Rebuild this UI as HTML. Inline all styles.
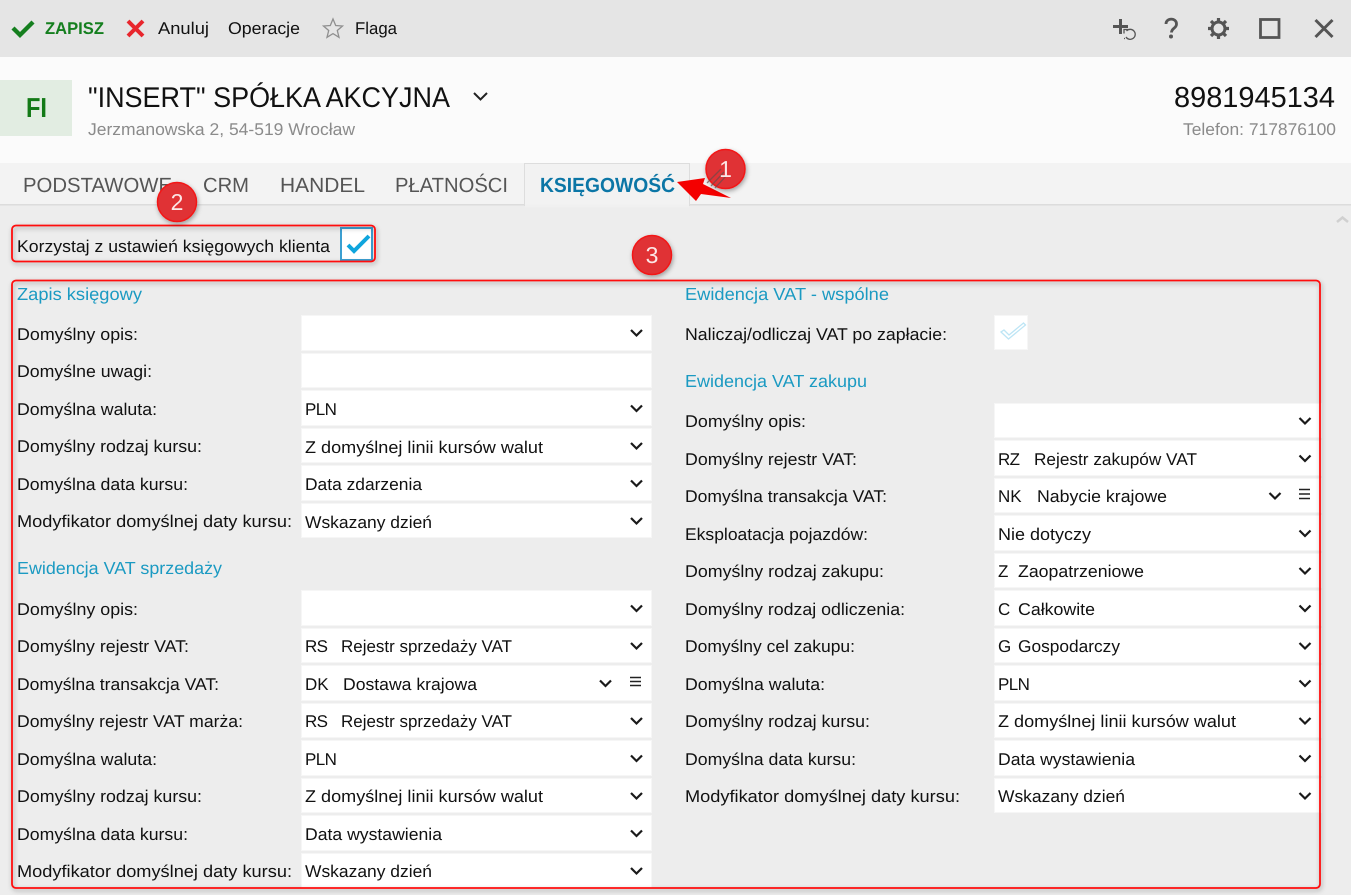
<!DOCTYPE html>
<html lang="pl"><head><meta charset="utf-8"><title>Księgowość</title>
<style>
html,body{margin:0;padding:0;background:#ededed;width:1351px;height:895px;overflow:hidden}
svg{display:block}
text{font-family:"Liberation Sans",sans-serif;font-size:17px;fill:#111;text-rendering:geometricPrecision}
.t{fill:#1b9ac2;font-size:17.5px}
.g{fill:#8b8b8b;font-size:17px}
.tab{fill:#555;font-size:20.5px}
.c{fill:#fff;fill-opacity:.88;font-size:23px;text-anchor:middle}
.b{fill:#fff;stroke:#f6f6f6;stroke-width:1}
.s{letter-spacing:-.6px}
</style></head><body>
<svg width="1351" height="895" viewBox="0 0 1351 895" xmlns="http://www.w3.org/2000/svg">
<defs><filter id="s" x="-10%" y="-10%" width="120%" height="120%"><feDropShadow dx="1" dy="2" stdDeviation="2.5" flood-color="#000" flood-opacity=".35"/></filter></defs>
<rect width="1351" height="895" fill="#ededed"/>
<rect width="1351" height="57" fill="#e5e5e5"/>
<rect y="57" width="1351" height="106" fill="#fbfbfb"/>
<rect y="163" width="1351" height="41" fill="#f3f3f3"/>
<rect y="204" width="1351" height="1.500" fill="#dcdcdc"/>
<rect x="524.500" y="163.500" width="165" height="42" fill="#f2f2f2" stroke="#dddddd"/>
<rect y="204.500" x="525" width="164" height="3" fill="#f0f0f0"/>

<!-- toolbar -->
<path d="M13 28l7 7 13-13" fill="none" stroke="#157f1f" stroke-width="4.300"/>
<text x="45" y="34" textLength="59" lengthAdjust="spacingAndGlyphs" style="fill:#157f1f;font-weight:bold">ZAPISZ</text>
<path d="M128 21l15 15M143 21l-15 15" fill="none" stroke="#e8262d" stroke-width="4"/>
<text x="158" y="34" textLength="51" lengthAdjust="spacingAndGlyphs">Anuluj</text>
<text x="228" y="34" textLength="72" lengthAdjust="spacingAndGlyphs">Operacje</text>
<path d="M333 19l2.700 6.500 6.800.5-5.200 4.500 1.700 6.800-6-3.700-6 3.700 1.700-6.800-5.200-4.500 6.800-.5z" fill="none" stroke="#8f8f8f" stroke-width="1.300"/>
<text x="355" y="34" textLength="42" lengthAdjust="spacingAndGlyphs">Flaga</text>

<path d="M1113 26.500h15M1120.500 19v15" stroke="#555" stroke-width="3" fill="none"/>
<path d="M1126.500 31a5 5 0 1 1 -.5 6M1128.500 29.500h-4.500v4M1124 38.500h1" stroke="#555" stroke-width="1.300" fill="none"/>
<path d="M1166 24c0-6.500 10.500-6.500 10.500 0 0 4.500-5 4-5 8.500" stroke="#555" stroke-width="2.800" fill="none"/>
<circle cx="1171" cy="36.500" r="2" fill="#555"/>
<circle cx="1218.500" cy="28.500" r="6.500" fill="none" stroke="#555" stroke-width="3"/>
<path d="M1218.500 18v4M1218.500 35v4M1208 28.500h4M1225 28.500h4M1211 21l3 3M1223 33l3 3M1226 21l-3 3M1214 33l-3 3" stroke="#555" stroke-width="3.200"/>
<rect x="1260.500" y="19.500" width="18.500" height="18" fill="none" stroke="#555" stroke-width="2.800"/>
<path d="M1315.500 20l17 17M1332.500 20l-17 17" stroke="#555" stroke-width="3" fill="none"/>

<!-- header -->
<rect y="80" width="72" height="56" fill="#e2ede2"/>
<text x="26" y="117" textLength="21" lengthAdjust="spacingAndGlyphs" style="font-size:27.500px;font-weight:bold;fill:#137a17">FI</text>
<text x="88" y="107" textLength="362" lengthAdjust="spacingAndGlyphs" style="font-size:28.500px">"INSERT" SPÓŁKA AKCYJNA</text>
<path d="M474 93l6.500 6.500 6.500-6.500" fill="none" stroke="#222" stroke-width="2"/>
<text x="88" y="135" textLength="267" lengthAdjust="spacingAndGlyphs" class="g">Jerzmanowska 2, 54-519 Wrocław</text>
<text x="1174" y="107" textLength="161" lengthAdjust="spacingAndGlyphs" style="font-size:29px">8981945134</text>
<text x="1183" y="135" textLength="153" lengthAdjust="spacingAndGlyphs" class="g">Telefon: 717876100</text>

<!-- tabs -->
<text x="23" y="192" textLength="149" lengthAdjust="spacingAndGlyphs" class="tab">PODSTAWOWE</text>
<text x="203" y="192" textLength="46" lengthAdjust="spacingAndGlyphs" class="tab">CRM</text>
<text x="280" y="192" textLength="85" lengthAdjust="spacingAndGlyphs" class="tab">HANDEL</text>
<text x="395" y="192" textLength="113" lengthAdjust="spacingAndGlyphs" class="tab">PŁATNOŚCI</text>
<text x="540" y="192" textLength="135" lengthAdjust="spacingAndGlyphs" style="font-size:20.500px;font-weight:bold;fill:#0b76a6">KSIĘGOWOŚĆ</text>
<path d="M1337 222l5.500-4.500 5.500 4.500" fill="none" stroke="#d0d0d0" stroke-width="2.500"/>

<!-- client checkbox -->
<text x="17" y="252" textLength="313" lengthAdjust="spacingAndGlyphs">Korzystaj z ustawień księgowych klienta</text>
<rect x="341" y="228" width="31" height="32" fill="#fff" stroke="#3b9fd1" stroke-width="2"/>
<path d="M348 245l6 6 15-15" fill="none" stroke="#0fa5dd" stroke-width="4"/>

<!-- white boxes -->
<g>
<rect class="b" x="301.500" y="315.500" width="350" height="35"/>
<rect class="b" x="301.500" y="353.500" width="350" height="34"/>
<rect class="b" x="301.500" y="390.500" width="350" height="35"/>
<rect class="b" x="301.500" y="428.500" width="350" height="34"/>
<rect class="b" x="301.500" y="465.500" width="350" height="35"/>
<rect class="b" x="301.500" y="503.500" width="350" height="34"/>
<rect class="b" x="301.500" y="590.500" width="350" height="35"/>
<rect class="b" x="301.500" y="628.500" width="350" height="34"/>
<rect class="b" x="301.500" y="665.500" width="350" height="35"/>
<rect class="b" x="301.500" y="703.500" width="350" height="34"/>
<rect class="b" x="301.500" y="740.500" width="350" height="35"/>
<rect class="b" x="301.500" y="778.500" width="350" height="34"/>
<rect class="b" x="301.500" y="815.500" width="350" height="35"/>
<rect class="b" x="301.500" y="853.500" width="350" height="34"/>
<rect class="b" x="994.500" y="403.500" width="327" height="34"/>
<rect class="b" x="994.500" y="440.500" width="327" height="35"/>
<rect class="b" x="994.500" y="478.500" width="327" height="34"/>
<rect class="b" x="994.500" y="515.500" width="327" height="35"/>
<rect class="b" x="994.500" y="553.500" width="327" height="34"/>
<rect class="b" x="994.500" y="590.500" width="327" height="35"/>
<rect class="b" x="994.500" y="628.500" width="327" height="34"/>
<rect class="b" x="994.500" y="665.500" width="327" height="35"/>
<rect class="b" x="994.500" y="703.500" width="327" height="34"/>
<rect class="b" x="994.500" y="740.500" width="327" height="35"/>
<rect class="b" x="994.500" y="778.500" width="327" height="34"/>
<rect class="b" x="994.500" y="315.500" width="33" height="34"/>
</g>
<path d="M1001 332l7.500 7 17-14-2-2-14.500 12-5-5z" fill="none" stroke="#bde5f5" stroke-width="1.300"/>

<!-- chevrons -->
<path fill="none" stroke="#1a1a1a" stroke-width="2.200" d="M631 330l5.500 5.500 5.500-5.500M631 405.500l5.500 5.500 5.500-5.500M631 443l5.500 5.500 5.500-5.500M631 480.500l5.500 5.500 5.500-5.500M631 518l5.500 5.500 5.500-5.500M631 605.500l5.500 5.500 5.500-5.500M631 643l5.500 5.500 5.500-5.500M600 680.500l5.500 5.500 5.500-5.500M631 718l5.500 5.500 5.500-5.500M631 755.500l5.500 5.500 5.500-5.500M631 793l5.500 5.500 5.500-5.500M631 830.500l5.500 5.500 5.500-5.500M631 868l5.500 5.500 5.500-5.500M1299.500 418l5.500 5.500 5.500-5.500M1299.500 455.500l5.500 5.500 5.500-5.500M1269.500 493l5.500 5.500 5.500-5.500M1299.500 530.500l5.500 5.500 5.500-5.500M1299.500 568l5.500 5.500 5.500-5.500M1299.500 605.500l5.500 5.500 5.500-5.500M1299.500 643l5.500 5.500 5.500-5.500M1299.500 680.500l5.500 5.500 5.500-5.500M1299.500 718l5.500 5.500 5.500-5.500M1299.500 755.500l5.500 5.500 5.500-5.500M1299.500 793l5.500 5.500 5.500-5.500"/>
<path fill="none" stroke="#222" stroke-width="1.400" d="M630 677.500h11M630 681.500h11M630 685.500h11M1299 489.500h11M1299 494h11M1299 498.500h11"/>

<!-- left column -->
<text class="t" x="17" y="300" textLength="125" lengthAdjust="spacingAndGlyphs">Zapis księgowy</text>
<text x="17" y="340" textLength="121" lengthAdjust="spacingAndGlyphs">Domyślny opis:</text>
<text x="17" y="377" textLength="135" lengthAdjust="spacingAndGlyphs">Domyślne uwagi:</text>
<text x="17" y="415" textLength="140" lengthAdjust="spacingAndGlyphs">Domyślna waluta:</text>
<text class="s" x="305" y="415">PLN</text>
<text x="17" y="452" textLength="185" lengthAdjust="spacingAndGlyphs">Domyślny rodzaj kursu:</text>
<text x="305" y="453" textLength="238" lengthAdjust="spacingAndGlyphs">Z domyślnej linii kursów walut</text>
<text x="17" y="490" textLength="171" lengthAdjust="spacingAndGlyphs">Domyślna data kursu:</text>
<text x="305" y="490" textLength="117" lengthAdjust="spacingAndGlyphs">Data zdarzenia</text>
<text x="17" y="527" textLength="275" lengthAdjust="spacingAndGlyphs">Modyfikator domyślnej daty kursu:</text>
<text x="305" y="528" textLength="127" lengthAdjust="spacingAndGlyphs">Wskazany dzień</text>

<text class="t" x="17" y="574" textLength="205" lengthAdjust="spacingAndGlyphs">Ewidencja VAT sprzedaży</text>
<text x="17" y="615" textLength="121" lengthAdjust="spacingAndGlyphs">Domyślny opis:</text>
<text x="17" y="652" textLength="172" lengthAdjust="spacingAndGlyphs">Domyślny rejestr VAT:</text>
<text class="s" x="305" y="652">RS</text>
<text x="341" y="652" textLength="171" lengthAdjust="spacingAndGlyphs">Rejestr sprzedaży VAT</text>
<text x="17" y="690" textLength="202" lengthAdjust="spacingAndGlyphs">Domyślna transakcja VAT:</text>
<text x="305" y="690">DK</text>
<text x="343" y="690" textLength="134" lengthAdjust="spacingAndGlyphs">Dostawa krajowa</text>
<text x="17" y="727" textLength="226" lengthAdjust="spacingAndGlyphs">Domyślny rejestr VAT marża:</text>
<text class="s" x="305" y="727">RS</text>
<text x="341" y="727" textLength="171" lengthAdjust="spacingAndGlyphs">Rejestr sprzedaży VAT</text>
<text x="17" y="765" textLength="140" lengthAdjust="spacingAndGlyphs">Domyślna waluta:</text>
<text class="s" x="305" y="765">PLN</text>
<text x="17" y="802" textLength="185" lengthAdjust="spacingAndGlyphs">Domyślny rodzaj kursu:</text>
<text x="305" y="802" textLength="238" lengthAdjust="spacingAndGlyphs">Z domyślnej linii kursów walut</text>
<text x="17" y="840" textLength="171" lengthAdjust="spacingAndGlyphs">Domyślna data kursu:</text>
<text x="305" y="840" textLength="137" lengthAdjust="spacingAndGlyphs">Data wystawienia</text>
<text x="17" y="877" textLength="275" lengthAdjust="spacingAndGlyphs">Modyfikator domyślnej daty kursu:</text>
<text x="305" y="877" textLength="127" lengthAdjust="spacingAndGlyphs">Wskazany dzień</text>

<!-- right column -->
<text class="t" x="685" y="300" textLength="204" lengthAdjust="spacingAndGlyphs">Ewidencja VAT - wspólne</text>
<text x="685" y="340" textLength="262" lengthAdjust="spacingAndGlyphs">Naliczaj/odliczaj VAT po zapłacie:</text>
<text class="t" x="685" y="387" textLength="182" lengthAdjust="spacingAndGlyphs">Ewidencja VAT zakupu</text>
<text x="685" y="427" textLength="121" lengthAdjust="spacingAndGlyphs">Domyślny opis:</text>
<text x="685" y="465" textLength="172" lengthAdjust="spacingAndGlyphs">Domyślny rejestr VAT:</text>
<text class="s" x="998" y="465">RZ</text>
<text x="1034" y="465" textLength="163" lengthAdjust="spacingAndGlyphs">Rejestr zakupów VAT</text>
<text x="685" y="502" textLength="202" lengthAdjust="spacingAndGlyphs">Domyślna transakcja VAT:</text>
<text x="998" y="502">NK</text>
<text x="1037" y="502" textLength="130" lengthAdjust="spacingAndGlyphs">Nabycie krajowe</text>
<text x="685" y="540" textLength="183" lengthAdjust="spacingAndGlyphs">Eksploatacja pojazdów:</text>
<text x="998" y="540" textLength="93" lengthAdjust="spacingAndGlyphs">Nie dotyczy</text>
<text x="685" y="577" textLength="199" lengthAdjust="spacingAndGlyphs">Domyślny rodzaj zakupu:</text>
<text x="998" y="577">Z</text>
<text x="1018" y="577" textLength="126" lengthAdjust="spacingAndGlyphs">Zaopatrzeniowe</text>
<text x="685" y="615" textLength="220" lengthAdjust="spacingAndGlyphs">Domyślny rodzaj odliczenia:</text>
<text x="998" y="615">C</text>
<text x="1018" y="615" textLength="77" lengthAdjust="spacingAndGlyphs">Całkowite</text>
<text x="685" y="652" textLength="170" lengthAdjust="spacingAndGlyphs">Domyślny cel zakupu:</text>
<text x="998" y="652">G</text>
<text x="1018" y="652" textLength="102" lengthAdjust="spacingAndGlyphs">Gospodarczy</text>
<text x="685" y="690" textLength="140" lengthAdjust="spacingAndGlyphs">Domyślna waluta:</text>
<text class="s" x="998" y="690">PLN</text>
<text x="685" y="727" textLength="185" lengthAdjust="spacingAndGlyphs">Domyślny rodzaj kursu:</text>
<text x="998" y="727" textLength="238" lengthAdjust="spacingAndGlyphs">Z domyślnej linii kursów walut</text>
<text x="685" y="765" textLength="171" lengthAdjust="spacingAndGlyphs">Domyślna data kursu:</text>
<text x="998" y="765" textLength="137" lengthAdjust="spacingAndGlyphs">Data wystawienia</text>
<text x="685" y="802" textLength="275" lengthAdjust="spacingAndGlyphs">Modyfikator domyślnej daty kursu:</text>
<text x="998" y="802" textLength="127" lengthAdjust="spacingAndGlyphs">Wskazany dzień</text>

<!-- annotations -->
<g filter="url(#s)" fill="none" stroke="#ff0a0a" stroke-width="1.800">
<rect x="12" y="225.500" width="363" height="36" rx="4"/>
<rect x="12" y="280.500" width="1308" height="607.500" rx="4"/>
</g>
<path d="M677 182l28-4-2 6 28 14-30-4-5 7z" fill="#f40000"/>
<g filter="url(#s)" fill="#e03136" stroke="#f31818" stroke-width="1.500">
<circle cx="725.500" cy="169" r="19.500"/>
<circle cx="177" cy="202" r="19.500"/>
<circle cx="652" cy="255" r="19.500"/>
</g>
<path d="M707 183l14-14M711 186l13-14M715 188l11-12" stroke="#6e4a4a" stroke-width="1.300" opacity=".7"/>
<text class="c" x="725.500" y="177">1</text>
<text class="c" x="177" y="210">2</text>
<text class="c" x="652" y="263">3</text>
</svg>
</body></html>
